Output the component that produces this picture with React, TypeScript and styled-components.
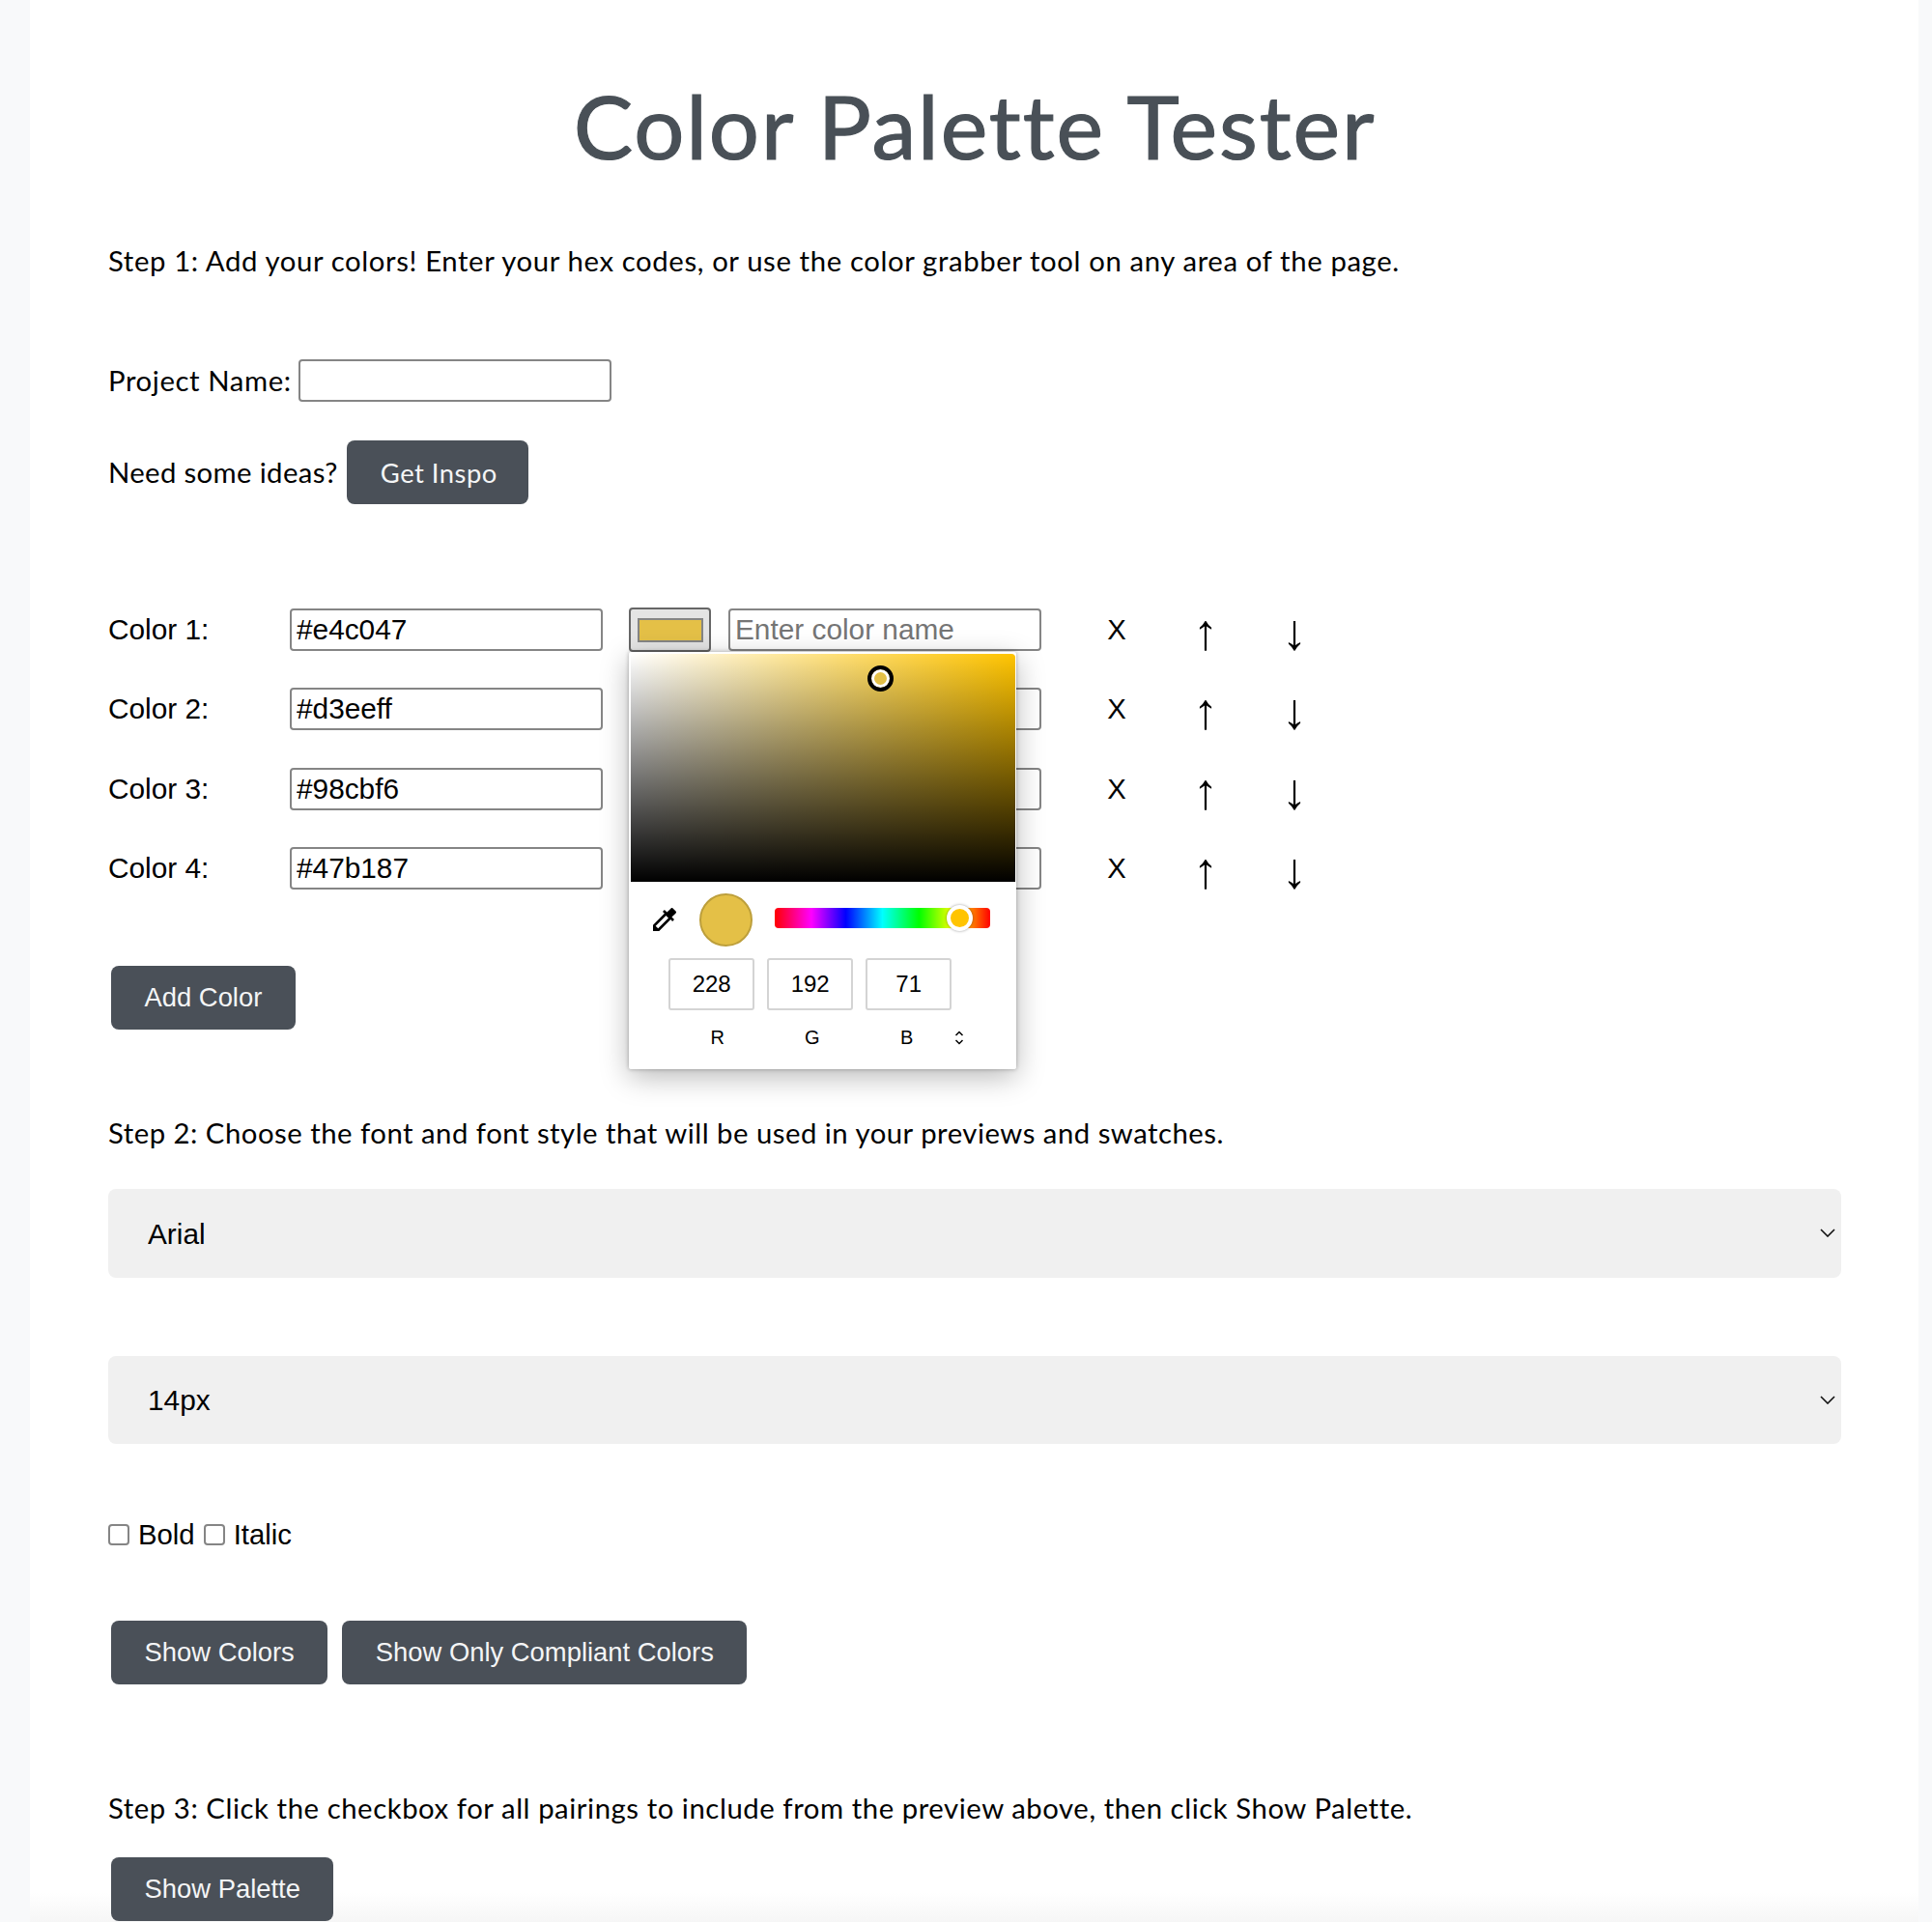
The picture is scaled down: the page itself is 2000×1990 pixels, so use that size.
import React from "react";
import styled, { createGlobalStyle } from "styled-components";

const BRAND = `Lato, "Open Sans", sans-serif`;
const SANS = `"Liberation Sans", Arial, sans-serif`;

const colors = [
  { id: 1, hex: "#e4c047" },
  { id: 2, hex: "#d3eeff" },
  { id: 3, hex: "#98cbf6" },
  { id: 4, hex: "#47b187" },
];

const App: React.FC = () => {
  return (
    <Page>
      <GlobalStyle />
      <Sheet>
        <Title>Color Palette Tester</Title>
        <StepText $track={0.62}>
          Step 1: Add your colors! Enter your hex codes, or use the color grabber tool on any area of the page.
        </StepText>

        <ProjectRow>
          <BrandLabel htmlFor="project">Project Name:</BrandLabel>
          <TextField id="project" $width={324} />
        </ProjectRow>
        <InspoRow>
          <IdeasLabel>Need some ideas?</IdeasLabel>
          <InspoButton>Get Inspo</InspoButton>
        </InspoRow>

        <ColorList>
          {colors.map((c) => (
            <ColorRow key={c.id}>
              <ColorLabel>Color {c.id}:</ColorLabel>
              <TextField value={c.hex} readOnly $width={324} />
              <Swatch $color={c.hex} aria-label={`Pick color ${c.id}`}>
                <span />
              </Swatch>
              <TextField placeholder="Enter color name" $width={324} />
              <RemoveCell>X</RemoveCell>
              <ArrowCell>↑</ArrowCell>
              <ArrowCell>↓</ArrowCell>
            </ColorRow>
          ))}
          <Picker>
            <SatArea>
              <SatPointer />
            </SatArea>
            <PickerControls>
              <DropperRow>
                <svg width="32" height="32" viewBox="0 0 24 24" fill="#000">
                  <path d="M20.71 5.63l-2.34-2.34c-.39-.39-1.02-.39-1.41 0l-3.12 3.12-1.93-1.91-1.41 1.41 1.42 1.42L3 16.25V21h4.75l8.92-8.92 1.42 1.42 1.41-1.41-1.92-1.92 3.12-3.12c.4-.4.4-1.03.01-1.42zM6.92 19L5 17.08l8.06-8.06 1.92 1.92L6.92 19z" />
                </svg>
                <ColorDot />
                <HueBar>
                  <HueThumb />
                </HueBar>
              </DropperRow>
              <RgbInputs>
                <RgbField value="228" readOnly />
                <RgbField value="192" readOnly />
                <RgbField value="71" readOnly />
              </RgbInputs>
              <RgbLabels>
                <RgbLabel>R</RgbLabel>
                <RgbLabel>G</RgbLabel>
                <RgbLabel>B</RgbLabel>
                <svg width="10" height="15" viewBox="0 0 10 15" fill="none" stroke="#000" strokeWidth="1.5">
                  <path d="M1.5 5L5 1.5 8.5 5M1.5 10L5 13.5 8.5 10" />
                </svg>
              </RgbLabels>
            </PickerControls>
          </Picker>
        </ColorList>

        <ActionButton $top={79}>Add Color</ActionButton>

        <StepText $top={87.5} $track={0.5}>
          Step 2: Choose the font and font style that will be used in your previews and swatches.
        </StepText>

        <SelectWrap $top={38}>
          <FontSelect defaultValue="Arial">
            <option>Arial</option>
          </FontSelect>
          <Chevron />
        </SelectWrap>
        <SelectWrap $top={81}>
          <FontSelect defaultValue="14px">
            <option>14px</option>
          </FontSelect>
          <Chevron />
        </SelectWrap>

        <StyleRow>
          <StyleCheck type="checkbox" id="bold" />
          <StyleLabel htmlFor="bold">Bold</StyleLabel>
          <StyleCheck type="checkbox" id="italic" />
          <StyleLabel htmlFor="italic">Italic</StyleLabel>
        </StyleRow>

        <ButtonRow>
          <ActionButton>Show Colors</ActionButton>
          <ActionButton>Show Only Compliant Colors</ActionButton>
        </ButtonRow>

        <StepText $top={107.5} $track={0.56}>
          Step 3: Click the checkbox for all pairings to include from the preview above, then click Show Palette.
        </StepText>

        <ActionButton $top={31}>Show Palette</ActionButton>
      </Sheet>
    </Page>
  );
};

const Chevron: React.FC = () => (
  <ChevronIcon width="16" height="9" viewBox="0 0 16 9" fill="none" stroke="#111" strokeWidth="1.6">
    <path d="M1 1l7 7 7-7" />
  </ChevronIcon>
);

const GlobalStyle = createGlobalStyle`
  html, body {
    margin: 0;
    padding: 0;
    background: #f8f9fa;
  }
  * { box-sizing: border-box; }
`;

const Page = styled.div`
  width: 2000px;
  height: 1990px;
  overflow: hidden;
  padding-left: 31px;
`;

const Sheet = styled.main`
  width: 1955px;
  height: 1990px;
  background: linear-gradient(to bottom, #fff calc(100% - 30px), #f6f6f6 100%);
  padding: 80px 80px 0 81px;
  color: #000;
`;

const Title = styled.h1`
  margin: 0;
  height: 100px;
  line-height: 100px;
  text-align: center;
  font-family: ${BRAND};
  font-size: 92px;
  font-weight: 400;
  letter-spacing: 1.9px;
  -webkit-text-stroke: 1.2px #495057;
  color: #495057;
`;

const StepText = styled.p<{ $top?: number; $track: number }>`
  margin: ${(p) => p.$top ?? 70}px 0 0;
  height: 40px;
  line-height: 40px;
  font-family: ${BRAND};
  font-size: 29.3px;
  letter-spacing: ${(p) => p.$track}px;
  white-space: nowrap;
`;

const BrandLabel = styled.label`
  font-family: ${BRAND};
  font-size: 29.3px;
  letter-spacing: 0.6px;
  line-height: 44px;
`;

const IdeasLabel = styled.span`
  font-family: ${BRAND};
  font-size: 29.3px;
  letter-spacing: 0.36px;
  line-height: 44px;
`;

const ProjectRow = styled.div`
  margin-top: 82px;
  height: 44px;
  display: flex;
  align-items: center;
  gap: 7px;
`;

const InspoRow = styled.div`
  margin-top: 40px;
  height: 66px;
  display: flex;
  align-items: center;
  gap: 9px;
`;

const TextField = styled.input<{ $width: number }>`
  width: ${(p) => p.$width}px;
  height: 44px;
  flex: none;
  padding: 0 5px;
  border: 2px solid #858585;
  border-radius: 4px;
  background: #fff;
  font-family: ${SANS};
  font-size: 29.8px;
  color: #000;
  outline: none;
  &::placeholder { color: #757575; opacity: 1; }
`;

const ColorList = styled.div`
  position: relative;
  margin-top: 108px;
  display: flex;
  flex-direction: column;
  gap: 38.33px;
`;

const ColorRow = styled.div`
  height: 44px;
  display: flex;
  align-items: center;
`;

const ColorLabel = styled.label`
  width: 188px;
  flex: none;
  font-family: ${SANS};
  font-size: 29.8px;
`;

const Swatch = styled.button<{ $color: string }>`
  width: 85px;
  height: 46px;
  flex: none;
  margin: 0 18px 0 27px;
  padding: 0;
  display: flex;
  align-items: center;
  justify-content: center;
  border: 2px solid #666;
  border-radius: 4px;
  background: #e4e4e4;
  span {
    display: block;
    width: 68px;
    height: 25px;
    background: ${(p) => p.$color};
    border: 2px solid #858585;
  }
`;

const RemoveCell = styled.div`
  width: 92px;
  flex: none;
  margin-left: 32px;
  text-align: center;
  font-family: ${SANS};
  font-size: 29.3px;
  line-height: 44px;
`;

const ArrowCell = styled.div`
  width: 92px;
  height: 44px;
  flex: none;
  text-align: center;
  font-family: ${SANS};
  font-size: 52px;
  line-height: 48px;
`;

const Picker = styled.div`
  position: absolute;
  left: 538.7px;
  top: 45px;
  width: 401px;
  height: 432px;
  background: #fff;
  padding: 2px;
  border-radius: 2px;
  box-shadow: 0 0 4px rgba(0, 0, 0, 0.3), 0 8px 30px rgba(0, 0, 0, 0.28);
  font-family: ${SANS};
`;

const SatArea = styled.div`
  position: relative;
  width: 398px;
  height: 236px;
  border-radius: 4px 4px 0 0;
  background:
    linear-gradient(to bottom, rgba(0, 0, 0, 0), #000),
    linear-gradient(to right, #fff, rgb(255, 196, 0));
`;

const SatPointer = styled.div`
  position: absolute;
  left: 245.5px;
  top: 12px;
  width: 27px;
  height: 27px;
  border-radius: 50%;
  background: #e4c047;
  border: 4px solid #000;
  box-shadow: inset 0 0 0 3px #fff;
`;

const PickerControls = styled.div`
  padding: 11px 0 0 20px;
`;

const DropperRow = styled.div`
  display: flex;
  align-items: center;
  height: 56px;
  svg { flex: none; margin-left: -1px; }
`;

const ColorDot = styled.div`
  width: 55px;
  height: 55px;
  flex: none;
  margin-left: 20px;
  border-radius: 50%;
  background: #e4c047;
  border: 2px solid #bd9f3b;
`;

const HueBar = styled.div`
  position: relative;
  width: 223px;
  height: 21px;
  flex: none;
  margin: -4px 0 0 23px;
  border-radius: 4px;
  background: linear-gradient(to right, #f00 0%, #f0f 17%, #00f 33%, #0ff 50%, #0f0 67%, #ff0 83%, #f00 100%);
`;

const HueThumb = styled.div`
  position: absolute;
  left: 178px;
  top: -3px;
  width: 27px;
  height: 27px;
  border-radius: 50%;
  background: rgb(255, 196, 0);
  border: 4px solid #fff;
  box-shadow: 0 0 3px rgba(0, 0, 0, 0.4);
`;

const RgbInputs = styled.div`
  display: flex;
  gap: 13px;
  margin: 12px 0 0 19px;
`;

const RgbField = styled.input`
  width: 89px;
  height: 54px;
  padding: 0 0 0 1px;
  text-align: center;
  border: 2px solid #d4d4d4;
  border-radius: 3px;
  background: #fff;
  font-family: ${SANS};
  font-size: 24px;
  color: #000;
  outline: none;
`;

const RgbLabels = styled.div`
  display: flex;
  align-items: center;
  height: 28px;
  margin: 14px 0 0 21px;
  svg { flex: none; }
`;

const RgbLabel = styled.span`
  width: 98px;
  text-align: center;
  font-size: 20px;
`;

const ActionButton = styled.button<{ $top?: number }>`
  display: block;
  height: 66px;
  margin: ${(p) => p.$top ?? 0}px 0 0 3px;
  padding: 0 34.5px;
  border: 0;
  border-radius: 8px;
  background: #4a5058;
  color: #f4f5f6;
  font-family: ${SANS};
  font-size: 27.4px;
`;

const InspoButton = styled(ActionButton)`
  margin: 0;
  padding: 0 32px 0 35px;
  font-family: ${BRAND};
  letter-spacing: 0.5px;
`;

const SelectWrap = styled.div<{ $top: number }>`
  position: relative;
  margin-top: ${(p) => p.$top}px;
  height: 91.5px;
`;

const FontSelect = styled.select`
  width: 100%;
  height: 100%;
  appearance: none;
  padding: 0 41px;
  border: 0;
  border-radius: 8px;
  background: #f0f0f0;
  font-family: ${SANS};
  font-size: 29.8px;
  color: #000;
  outline: none;
`;

const ChevronIcon = styled.svg`
  position: absolute;
  right: 6px;
  top: 41px;
  pointer-events: none;
`;

const StyleRow = styled.div`
  margin-top: 74px;
  height: 40px;
  display: flex;
  align-items: center;
`;

const StyleCheck = styled.input`
  appearance: none;
  width: 22px;
  height: 22px;
  flex: none;
  margin: 0 9px 0 0;
  border: 2px solid #858585;
  border-radius: 4px;
  background: #fff;
`;

const StyleLabel = styled.label`
  margin-right: 9px;
  font-family: ${SANS};
  font-size: 29.3px;
`;

const ButtonRow = styled.div`
  margin-top: 69px;
  display: flex;
  gap: 12px;
`;

export default App;
